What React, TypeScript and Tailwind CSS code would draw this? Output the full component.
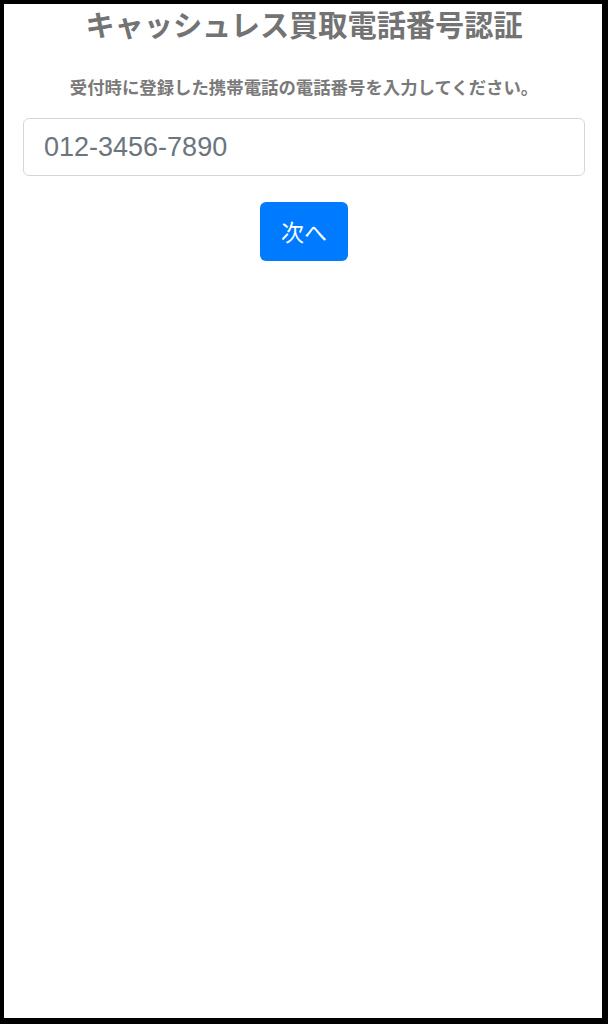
export default function App() {
  return (
    <div
      className="h-[1024px] w-[608px] bg-black pl-[4px] pt-[4px] pr-[6px] pb-[6px]"
      style={{ fontFamily: '"Noto Sans CJK JP", "Noto Sans", sans-serif' }}
    >
      <div className="h-full w-full bg-white pl-[19px] pr-[17px] flex flex-col items-center">
        <h1 className="mt-[2px] text-[29.2px] leading-[35px] font-bold text-[#737373]">
          キャッシュレス買取電話番号認証
        </h1>
        <p className="mt-[33px] text-[17.4px] leading-[25px] font-bold text-[#7a7a7a]">
          受付時に登録した携帯電話の電話番号を入力してください。
        </p>
        <input
          type="tel"
          placeholder="012-3456-7890"
          className="mt-[19px] w-full h-[58px] rounded-[6px] border-[1.5px] border-[#d3d7dc] px-[20px] text-[27px] text-[#495057] placeholder:text-[#6c757d] outline-none"
          style={{ fontFamily: '"Liberation Sans", Arial, sans-serif' }}
        />
        <button className="mt-[26px] w-[88px] h-[59px] rounded-[6px] bg-[#007bff] text-white text-[23px]">
          次へ
        </button>
      </div>
    </div>
  );
}
